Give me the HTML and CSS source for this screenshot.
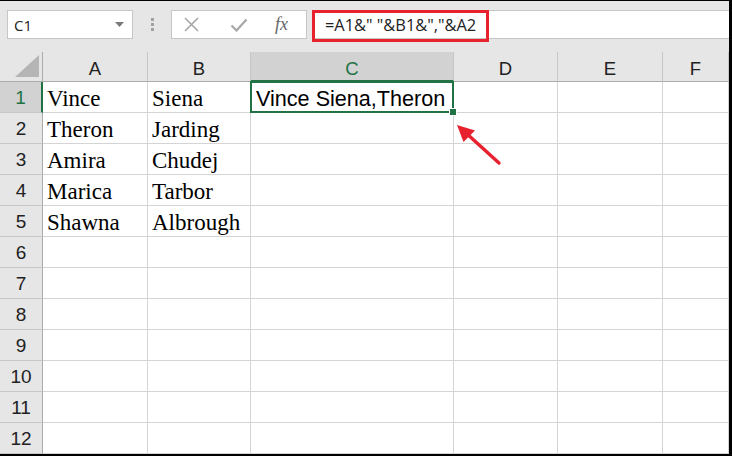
FILE: index.html
```html
<!DOCTYPE html>
<html>
<head>
<meta charset="utf-8">
<link rel="stylesheet" href="styles.css">
</head>
<body>
<div class="app">
  <div class="toolbar">
    <div class="namebox">
      <span class="nb-text">C1</span>
      <svg class="caret" width="9" height="5" viewBox="0 0 9 5"><path d="M0 0h9L4.5 5z" fill="#7a7a7a"/></svg>
    </div>
    <div class="grip"><i></i><i></i><i></i></div>
    <div class="fxbox">
      <svg class="ico" width="17" height="17" viewBox="0 0 17 17"><path d="M2 2L15 15M15 2L2 15" stroke="#a6a6a6" stroke-width="1.6" fill="none"/></svg>
      <svg class="ico" width="18" height="16" viewBox="0 0 18 16"><path d="M1.5 8.5L6.5 13.5L16.5 2.5" stroke="#a6a6a6" stroke-width="2.2" fill="none"/></svg>
      <span class="fx">fx</span>
    </div>
    <div class="formula">
      <span class="ftext">=A1&amp;" "&amp;B1&amp;","&amp;A2</span>
      <div class="redbox"></div>
    </div>
  </div>
  <div class="sheet">
    <div class="corner"><svg width="24" height="22" viewBox="0 0 24 22"><path d="M0 22L24 22L24 0z" fill="#b5b5b5"/></svg></div>
    <div class="ch">A</div><div class="ch">B</div><div class="ch sel">C</div><div class="ch">D</div><div class="ch">E</div><div class="ch">F</div>

    <div class="rh sel">1</div><div class="c">Vince</div><div class="c">Siena</div><div class="c active"><span class="cal">Vince Siena,Theron</span><div class="selbox"></div><div class="handle"></div></div><div class="c"></div><div class="c"></div><div class="c"></div>
    <div class="rh">2</div><div class="c">Theron</div><div class="c">Jarding</div><div class="c"></div><div class="c"></div><div class="c"></div><div class="c"></div>
    <div class="rh">3</div><div class="c">Amira</div><div class="c">Chudej</div><div class="c"></div><div class="c"></div><div class="c"></div><div class="c"></div>
    <div class="rh">4</div><div class="c">Marica</div><div class="c">Tarbor</div><div class="c"></div><div class="c"></div><div class="c"></div><div class="c"></div>
    <div class="rh">5</div><div class="c">Shawna</div><div class="c">Albrough</div><div class="c"></div><div class="c"></div><div class="c"></div><div class="c"></div>
    <div class="rh">6</div><div class="c"></div><div class="c"></div><div class="c"></div><div class="c"></div><div class="c"></div><div class="c"></div>
    <div class="rh">7</div><div class="c"></div><div class="c"></div><div class="c"></div><div class="c"></div><div class="c"></div><div class="c"></div>
    <div class="rh">8</div><div class="c"></div><div class="c"></div><div class="c"></div><div class="c"></div><div class="c"></div><div class="c"></div>
    <div class="rh">9</div><div class="c"></div><div class="c"></div><div class="c"></div><div class="c"></div><div class="c"></div><div class="c"></div>
    <div class="rh">10</div><div class="c"></div><div class="c"></div><div class="c"></div><div class="c"></div><div class="c"></div><div class="c"></div>
    <div class="rh">11</div><div class="c"></div><div class="c"></div><div class="c"></div><div class="c"></div><div class="c"></div><div class="c"></div>
    <div class="rh">12</div><div class="c"></div><div class="c"></div><div class="c"></div><div class="c"></div><div class="c"></div><div class="c"></div>

    <svg class="arrow" width="60" height="50" viewBox="0 0 60 50"><path d="M47 43L14 13" stroke="#e8212f" stroke-width="3.4" stroke-linecap="round"/><path d="M5 5L23 10.5L11.5 22z" fill="#e8212f"/></svg>
  </div>
</div>
</body>
</html>
```
FILE: styles.css
```css
* { box-sizing: border-box; }
html, body { margin: 0; padding: 0; background: #fff; }
.app {
  width: 732px; height: 456px;
  border-top: 1px solid #000;
  border-right: 3px solid #000;
  border-bottom: 2px solid #000;
  background: #e6e6e6;
  display: flex; flex-direction: column;
  font-family: "Liberation Sans", Arial, sans-serif;
}
.toolbar {
  height: 51px; flex: none;
  display: flex; align-items: flex-start;
  padding: 9px 0 0 7px;
}
.namebox {
  width: 126px; height: 29px;
  background: #fff; border: 1px solid #c6c6c6;
  display: flex; align-items: center; justify-content: space-between;
  padding: 0 8px 0 6px;
  font-family: "Open Sans", sans-serif;
  font-size: 15px; color: #222;
}
.grip {
  width: 38px; height: 29px;
  display: flex; flex-direction: column; align-items: center; justify-content: center; gap: 2px;
}
.grip i { width: 3px; height: 3px; background: #a0a0a0; display: block; }
.fxbox {
  width: 136px; height: 29px;
  background: #fff; border: 1px solid #c6c6c6;
  display: flex; align-items: center;
  padding-left: 11px; gap: 30px;
}
.fx {
  font-family: "Liberation Serif", serif; font-style: italic;
  font-size: 18px; color: #666; margin-left: -3px;
}
.formula {
  position: relative;
  margin-left: 5px; height: 29px; flex: 1;
  background: #fff; border: 1px solid #c6c6c6; border-right: none;
  display: flex; align-items: center; padding-left: 12px;
  font-family: "Open Sans", sans-serif;
  font-size: 16.4px; color: #222;
}
.redbox {
  position: absolute; left: -1px; top: -1px;
  width: 177px; height: 32px;
  border: 3px solid #e8212f;
}
.sheet {
  position: relative; flex: 1;
  display: grid;
  grid-template-columns: 43px 105px 103px 203px 104px 105px 1fr;
  grid-template-rows: 30px repeat(12, 31px);
  background: #fff;
}
.corner, .ch, .rh {
  background: #e6e6e6;
  border-right: 1px solid #c6c6c6;
  border-bottom: 1px solid #c6c6c6;
}
.corner {
  border-right-color: #ababab; border-bottom-color: #ababab;
  display: flex; align-items: flex-end; justify-content: flex-end;
  padding: 0 3px 4px 0;
}
.ch {
  border-bottom-color: #ababab;
  display: flex; align-items: center; justify-content: center;
  font-size: 18.5px; color: #222; padding-top: 5px;
}
.ch.sel { background: #d2d2d2; color: #217346; border-bottom: 2px solid #217346; }
.rh {
  border-right-color: #ababab;
  display: flex; align-items: center; justify-content: center;
  font-size: 19px; color: #222; padding-top: 1px;
}
.rh.sel { background: #d2d2d2; color: #217346; border-right: 2px solid #217346; }
.c {
  border-right: 1px solid #d4d4d4;
  border-bottom: 1px solid #d4d4d4;
  font-family: "Liberation Serif", "Times New Roman", serif;
  font-size: 23px; color: #000;
  padding: 3px 0 0 4px;
  white-space: nowrap; line-height: 28px;
}
.c.active { position: relative; }
.cal { font-family: "Liberation Sans", Arial, sans-serif; font-size: 21.6px; padding-left: 1px; }
.selbox {
  position: absolute; left: -1px; top: -1px; right: -1px; bottom: -1px;
  border: 2px solid #217346;
}
.handle {
  position: absolute; right: -4px; bottom: -4px;
  width: 6px; height: 6px; background: #217346; border: 1px solid #fff;
  box-sizing: content-box;
}
.arrow { position: absolute; left: 452px; top: 68px; }
```
